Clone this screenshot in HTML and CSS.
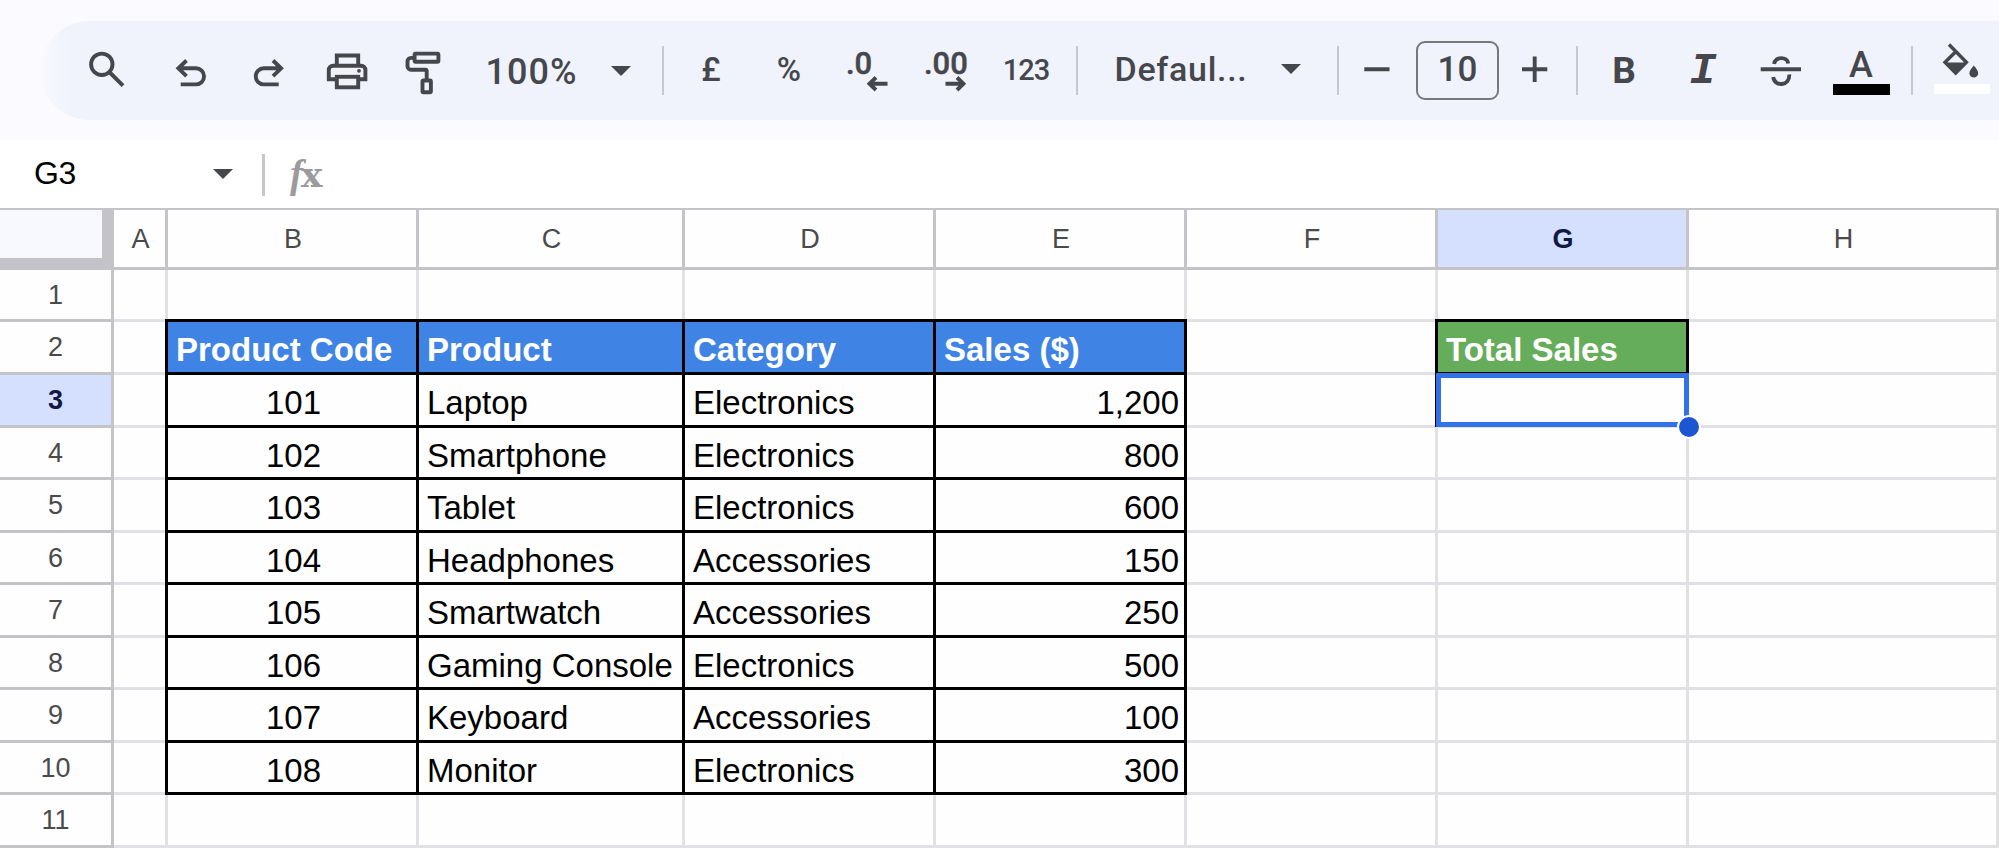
FILE: index.html
```html
<!DOCTYPE html>
<html lang="en">
<head>
    <meta charset="UTF-8">
    <meta name="viewport" content="width=device-width, initial-scale=1.0">
    <title>Total Sales - Spreadsheet</title>
    <link rel="stylesheet" href="styles.css">
</head>
<body>
    <div class="toolbar-area">
        <div class="toolbar">
            <div class="tool search">
                <svg width="81" height="99" viewBox="66 21 81 99"><circle cx="101.8" cy="64.3" r="10.7"/><path d="M109.3 72L123 85.6"/></svg>
            </div>
            <div class="tool">
                <svg width="78" height="99" viewBox="152 21 78 99"><path d="M180.7 84.4H196a8 8 0 0 0 0-16.1H178.5M186.5 60.5L178.4 68.3L186.5 76.1"/></svg>
            </div>
            <div class="tool">
                <svg width="78" height="99" viewBox="230 21 78 99"><path d="M278.7 84.4H263.8a8 8 0 0 1 0-16.1H281M273 60.5L281.1 68.3L273 76.1"/></svg>
            </div>
            <div class="tool">
                <svg width="78" height="99" viewBox="308 21 78 99"><path d="M336.8 65V55.5H358.2V65"/><path class="paper" d="M336.5 79.3H328.8V70a4.3 4.3 0 0 1 4.3-4.3H361.1a4.3 4.3 0 0 1 4.3 4.3V79.3H358.5"/><rect class="paper" x="336.8" y="76.8" width="21.4" height="10.5"/><circle class="solid" cx="359" cy="70.8" r="1.9"/></svg>
            </div>
            <div class="tool paint">
                <svg width="74" height="99" viewBox="386 21 74 99"><rect x="414.6" y="53.6" width="23.8" height="8.2" rx="1"/><path d="M414 57.9H411a3.5 3.5 0 0 0-3.5 3.5V66.2a3.5 3.5 0 0 0 3.5 3.5H425.2a1.5 1.5 0 0 1 1.5 1.5V80"/><rect x="422.5" y="80.5" width="8.4" height="11.7" rx="1"/></svg>
            </div>
            <div class="tool zoom">100%</div>
            <div class="tool zoom-arrow"><span class="caret"></span></div>
            <div class="separator"></div>
            <div class="tool currency">£</div>
            <div class="tool percent">%</div>
            <div class="tool">
                <svg width="78" height="99" viewBox="828 21 78 99"><text class="decimal" x="846" y="73.5">.0</text><path class="arrow" d="M887.5 83.7H869.5M876 77.5L869.5 83.7L876 90"/></svg>
            </div>
            <div class="tool">
                <svg width="78" height="99" viewBox="906 21 78 99"><text class="decimal" x="924" y="73.5">.00</text><path class="arrow" d="M945.5 83.7H963.3M957 77.5L963.4 83.7L957 90"/></svg>
            </div>
            <div class="tool formats">123</div>
            <div class="separator"></div>
            <div class="tool font">Defaul...</div>
            <div class="tool font-arrow"><span class="caret"></span></div>
            <div class="separator before-size"></div>
            <div class="tool minus">
                <svg width="54" height="99" viewBox="1350 21 54 99"><path d="M1364.3 69.2H1389.5"/></svg>
            </div>
            <div class="font-size">10</div>
            <div class="tool plus">
                <svg width="54" height="99" viewBox="1508 21 54 99"><path d="M1522 69.2H1547.3M1534.7 56.6V82"/></svg>
            </div>
            <div class="separator before-bold"></div>
            <div class="tool bold">B</div>
            <div class="tool italic">I</div>
            <div class="tool">
                <svg width="78" height="99" viewBox="1742 21 78 99"><path d="M1760.7 69.3H1801M1774.2 64C1774.8 56.2 1787.5 56.2 1788.2 63.5M1773.2 77C1774.5 87.5 1790.2 86 1789.2 74.5"/></svg>
            </div>
            <div class="tool text-color"><span>A</span><i class="swatch"></i></div>
            <div class="separator before-fill"></div>
            <div class="tool fill-color">
                <svg width="82" height="99" viewBox="1920 21 82 99"><path class="thin" d="M1949 44.5L1966.4 62.3L1955.7 73L1945 62.3L1955.7 51.7"/><path class="solid" d="M1945 62.5H1966.5L1955.7 73.5Z"/><path class="solid" d="M1973.8 65.5C1976.5 69 1978.2 71 1978.2 73.2A4.4 4.4 0 0 1 1969.4 73.2C1969.4 71 1971.1 69 1973.8 65.5Z"/><rect class="white" x="1934" y="84" width="56" height="10"/></svg>
            </div>
        </div>
    </div>

    <div class="formula-bar">
        <div class="cell-name">G3</div>
        <span class="caret"></span>
        <div class="divider"></div>
        <div class="fx"><em>f</em><span>x</span></div>
    </div>

    <table class="sheet">
        <colgroup>
            <col class="col-num"><col class="col-a"><col class="col-m"><col class="col-c"><col class="col-m"><col class="col-m"><col class="col-m"><col class="col-m"><col class="col-h">
        </colgroup>
        <tr class="letters">
            <th class="corner"></th><th>A</th><th>B</th><th>C</th><th>D</th><th>E</th><th>F</th><th class="active">G</th><th>H</th>
        </tr>
        <tr class="short">
            <th>1</th><td></td><td></td><td></td><td></td><td></td><td></td><td></td><td></td>
        </tr>
        <tr>
            <th>2</th><td></td><td class="box blue">Product Code</td><td class="box blue">Product</td><td class="box blue">Category</td><td class="box blue">Sales ($)</td><td></td><td class="box green">Total Sales</td><td></td>
        </tr>
        <tr>
            <th class="active">3</th><td></td><td class="box code">101</td><td class="box">Laptop</td><td class="box">Electronics</td><td class="box number">1,200</td><td></td><td class="selected"><span class="selection"><i class="handle"></i></span></td><td></td>
        </tr>
        <tr class="short">
            <th>4</th><td></td><td class="box code">102</td><td class="box">Smartphone</td><td class="box">Electronics</td><td class="box number">800</td><td></td><td></td><td></td>
        </tr>
        <tr>
            <th>5</th><td></td><td class="box code">103</td><td class="box">Tablet</td><td class="box">Electronics</td><td class="box number">600</td><td></td><td></td><td></td>
        </tr>
        <tr class="short">
            <th>6</th><td></td><td class="box code">104</td><td class="box">Headphones</td><td class="box">Accessories</td><td class="box number">150</td><td></td><td></td><td></td>
        </tr>
        <tr>
            <th>7</th><td></td><td class="box code">105</td><td class="box">Smartwatch</td><td class="box">Accessories</td><td class="box number">250</td><td></td><td></td><td></td>
        </tr>
        <tr class="short">
            <th>8</th><td></td><td class="box code">106</td><td class="box">Gaming Console</td><td class="box">Electronics</td><td class="box number">500</td><td></td><td></td><td></td>
        </tr>
        <tr>
            <th>9</th><td></td><td class="box code">107</td><td class="box">Keyboard</td><td class="box">Accessories</td><td class="box number">100</td><td></td><td></td><td></td>
        </tr>
        <tr class="short">
            <th>10</th><td></td><td class="box code">108</td><td class="box">Monitor</td><td class="box">Electronics</td><td class="box number">300</td><td></td><td></td><td></td>
        </tr>
        <tr>
            <th>11</th><td></td><td></td><td></td><td></td><td></td><td></td><td></td><td></td>
        </tr>
    </table>
</body>
</html>
```

FILE: styles.css
```css
* {
    box-sizing: border-box;
}
body {
    margin: 0;
    width: 1999px;
    height: 848px;
    overflow: hidden;
    background: #fefefe;
    font-family: "Liberation Sans", Arial, sans-serif;
    color: #000;
}

/* Toolbar */
.toolbar-area {
    height: 140px;
    padding: 21px 0 0 40px;
    background: #fafaff;
    overflow: hidden;
}
.toolbar {
    display: flex;
    align-items: center;
    height: 99px;
    padding-left: 26px;
    border-radius: 50px 0 0 50px;
    background: linear-gradient(to right, #fafaff, #f0f3fc 28px);
    overflow: hidden;
    font-family: Roboto, sans-serif;
    font-weight: 500;
    color: #45474d;
}
.tool {
    display: flex;
    flex: none;
    align-items: center;
    justify-content: center;
    width: 78px;
    height: 99px;
    white-space: nowrap;
}
.tool svg {
    display: block;
    fill: none;
    stroke: #45474d;
    stroke-width: 3.9;
}
.tool .solid {
    fill: #45474d;
    stroke: none;
}
.tool .white {
    fill: #fff;
    stroke: none;
}
.tool .paper {
    fill: #f0f2f7;
}
.tool .thin {
    stroke-width: 3.4;
}
.decimal {
    fill: #45474d;
    stroke: #45474d;
    stroke-width: 0.5px;
    font-size: 31px;
    font-weight: 500;
}
.search {
    width: 81px;
    margin-right: 5px;
}
.paint {
    width: 74px;
}
.zoom {
    width: 143px;
    padding-top: 3px;
    font-size: 36px;
    letter-spacing: 1px;
}
.zoom-arrow {
    width: 36px;
    margin-right: 23px;
}
.caret {
    flex: none;
    width: 0;
    height: 0;
    border-left: 10px solid transparent;
    border-right: 10px solid transparent;
    border-top: 10px solid #45474d;
}
.separator {
    flex: none;
    width: 2px;
    height: 49px;
    background: #c6c8d0;
    margin-right: 8px;
}
.currency,
.percent {
    padding-bottom: 3px;
    font-size: 33px;
}
.formats {
    width: 84px;
    margin-right: 8px;
    padding-bottom: 2px;
    font-size: 29px;
    font-weight: 500;
    letter-spacing: -1px;
}
.font {
    width: 158px;
    margin-left: 16px;
    padding-bottom: 3px;
    font-size: 34px;
    letter-spacing: 0.7px;
}
.font-arrow {
    width: 61px;
    margin-right: 16px;
    padding-bottom: 3px;
}
.before-size {
    margin-right: 11px;
}
.minus,
.plus {
    width: 54px;
}
.minus {
    margin-right: 12px;
}
.plus {
    margin: 0 14px 0 9px;
}
.font-size {
    display: flex;
    flex: none;
    align-items: center;
    justify-content: center;
    width: 83px;
    height: 59px;
    padding-bottom: 2px;
    border: 2px solid #76787e;
    border-radius: 9px;
    font-size: 35px;
}
.before-bold {
    margin-right: 6px;
}
.bold {
    width: 80px;
    font-size: 37px;
    font-weight: 700;
}
.italic {
    padding-top: 2px;
    font: italic 700 45px "Liberation Mono", monospace;
}
.text-color {
    flex-direction: column;
    justify-content: flex-start;
    width: 82px;
    padding-top: 26px;
    font-size: 36px;
    line-height: 37px;
}
.swatch {
    width: 57px;
    height: 11px;
    background: #000;
}
.before-fill {
    margin: 0 7px 0 9px;
}
.fill-color {
    width: 82px;
}

/* Formula bar */
.formula-bar {
    display: flex;
    align-items: center;
    height: 70px;
    padding-left: 34px;
    border-bottom: 2px solid #c4c3c7;
    background: #fff;
}
.cell-name {
    width: 179px;
    padding-bottom: 2px;
    font-size: 32px;
    letter-spacing: -0.5px;
    line-height: 36px;
}
.divider {
    width: 3px;
    height: 42px;
    margin: 2px 25px 0 29px;
    background: #c6c5c9;
}
.fx {
    display: flex;
    align-items: baseline;
    color: #9b9b9e;
    font-weight: 700;
    line-height: 40px;
}
.fx em {
    font-family: "Liberation Serif", serif;
    font-size: 39px;
}
.fx span {
    margin-left: -2px;
    font-family: "DejaVu Serif", serif;
    font-size: 36px;
}

/* Sheet grid */
.sheet {
    width: 1999px;
    table-layout: fixed;
    border-collapse: separate;
    border-spacing: 0;
}
.col-num {
    width: 114px;
}
.col-a {
    width: 54px;
}
.col-m {
    width: 251px;
}
.col-c {
    width: 266px;
}
.col-h {
    width: 310px;
}
.sheet tr {
    height: 53px;
}
.sheet .short {
    height: 52px;
}
.sheet .letters {
    height: 60px;
}
.sheet th,
.sheet td {
    padding: 0;
    border-right: 3px solid #e1e0e4;
    border-bottom: 3px solid #e1e0e4;
    line-height: 36px;
    white-space: nowrap;
}
.sheet th {
    border-color: #c4c3c7;
    color: #4a4a4d;
    font-size: 27px;
    font-weight: 400;
}
.sheet .letters th {
    padding-left: 2px;
}
.sheet td {
    padding: 6px 5px 0 8px;
    font-size: 33px;
}
.sheet .corner {
    border-width: 0 12px 12px 0;
    background: #f8f8ff;
}
.sheet .active {
    background: #d5e0ff;
    color: #101a45;
    font-weight: 700;
}
/* the shadows close the top and left side of the black frame */
.sheet .box {
    border-color: #000;
    box-shadow: -3px 0 #000, 0 -3px #000, -3px -3px #000;
}
.sheet .blue,
.sheet .green {
    color: #fff;
    font-weight: 700;
}
.sheet .blue {
    background: #3f84e5;
}
.sheet .green {
    background: #66ad5b;
}
.sheet .code {
    padding: 6px 0 0 3px;
    text-align: center;
}
.sheet .number {
    text-align: right;
}

/* Active cell outline with fill handle */
.sheet .selected {
    position: relative;
}
.selection {
    position: absolute;
    top: -2px;
    left: -2px;
    right: -3px;
    bottom: -2px;
    border: 5px solid #3272e8;
    box-shadow: -1px 0 #000;
}
.handle {
    position: absolute;
    right: -17px;
    bottom: -17px;
    width: 24px;
    height: 24px;
    border: 2px solid #fff;
    border-radius: 50%;
    background: #1d56d3;
}
```
